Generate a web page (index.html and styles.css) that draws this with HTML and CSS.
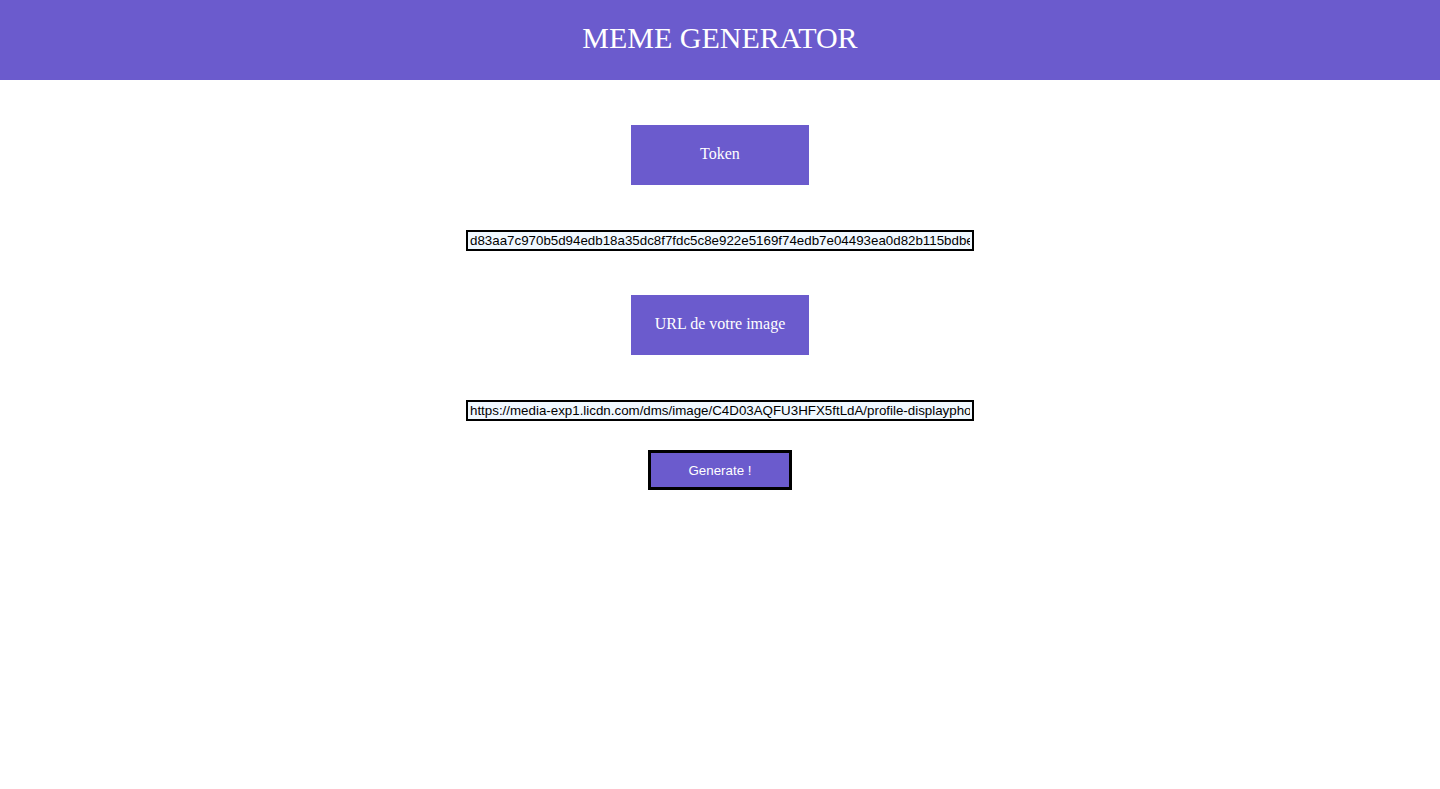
FILE: index.html
```html
<!DOCTYPE html>
<html lang="fr">
<head>
<meta charset="utf-8">
<title>Meme Generator</title>
<link rel="stylesheet" href="styles.css">
</head>
<body>
<header class="header"><h1 class="title">MEME GENERATOR</h1></header>
<main class="form">
  <div class="label">Token</div>
  <input class="field field-token" type="text" value="d83aa7c970b5d94edb18a35dc8f7fdc5c8e922e5169f74edb7e04493ea0d82b115bdbe">
  <div class="label">URL de votre image</div>
  <input class="field field-url" type="text" value="https://media-exp1.licdn.com/dms/image/C4D03AQFU3HFX5ftLdA/profile-displayphoto">
  <button class="generate" type="button">Generate !</button>
</main>
</body>
</html>
```
FILE: styles.css
```css
html, body {
  margin: 0;
  padding: 0;
  background: #ffffff;
}
body {
  font-family: "Liberation Serif", "Times New Roman", serif;
}
.header {
  height: 80px;
  background: #6b5bcd;
  display: flex;
  align-items: center;
  justify-content: center;
}
.title {
  margin: 0;
  font-weight: normal;
  font-size: 30px;
  color: #ffffff;
  line-height: 1;
  padding-bottom: 4px;
}
.form {
  display: flex;
  flex-direction: column;
  align-items: center;
  padding-top: 45px;
}
.label {
  box-sizing: border-box;
  width: 178px;
  height: 60px;
  padding-bottom: 2px;
  background: #6b5bcd;
  color: #ffffff;
  font-size: 16px;
  display: flex;
  align-items: center;
  justify-content: center;
}
.field {
  box-sizing: border-box;
  width: 508px;
  height: 21px;
  margin: 45px 0 44px;
  padding: 1px 2px;
  border: 2px solid #000000;
  background: #f0f8ff;
  font-family: "Liberation Sans", Arial, sans-serif;
  font-size: 13.33px;
  color: #000000;
  outline: none;
}
.field-url {
  margin-bottom: 29px;
}
.generate {
  box-sizing: border-box;
  width: 144px;
  height: 40px;
  border: 3px solid #000000;
  background: #6b5bcd;
  color: #ffffff;
  font-family: "Liberation Sans", Arial, sans-serif;
  font-size: 13.33px;
  padding: 0;
}
```
